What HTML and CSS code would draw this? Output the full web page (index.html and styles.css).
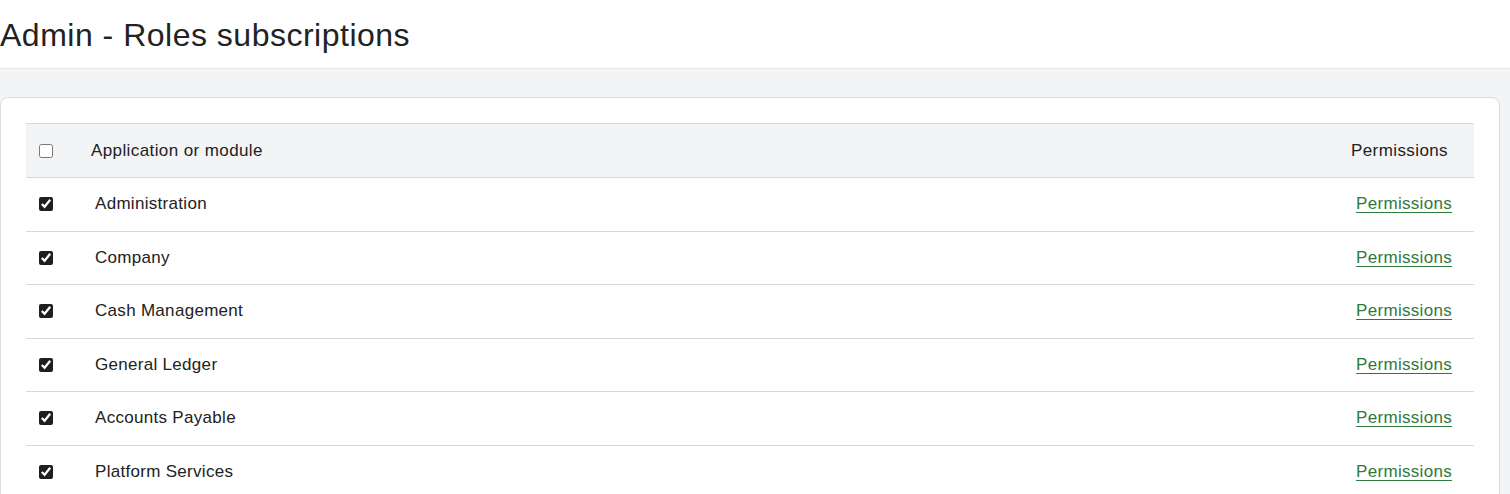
FILE: index.html
```html
<!DOCTYPE html>
<html lang="en">
<head>
<meta charset="utf-8">
<title>Admin - Roles subscriptions</title>
<link rel="stylesheet" href="styles.css">
</head>
<body>
<header class="page-header">
  <h1 class="page-title">Admin - Roles subscriptions</h1>
</header>
<main class="page-body">
  <section class="card">
    <table class="grid">
      <thead>
        <tr>
          <th class="col-check"><input type="checkbox" class="cb"></th>
          <th class="col-name">Application or module</th>
          <th class="col-perm">Permissions</th>
        </tr>
      </thead>
      <tbody>
        <tr>
          <td class="col-check"><input type="checkbox" class="cb" checked></td>
          <td class="col-name">Administration</td>
          <td class="col-perm"><a href="#" class="perm-link">Permissions</a></td>
        </tr>
        <tr>
          <td class="col-check"><input type="checkbox" class="cb" checked></td>
          <td class="col-name">Company</td>
          <td class="col-perm"><a href="#" class="perm-link">Permissions</a></td>
        </tr>
        <tr>
          <td class="col-check"><input type="checkbox" class="cb" checked></td>
          <td class="col-name">Cash Management</td>
          <td class="col-perm"><a href="#" class="perm-link">Permissions</a></td>
        </tr>
        <tr>
          <td class="col-check"><input type="checkbox" class="cb" checked></td>
          <td class="col-name">General Ledger</td>
          <td class="col-perm"><a href="#" class="perm-link">Permissions</a></td>
        </tr>
        <tr>
          <td class="col-check"><input type="checkbox" class="cb" checked></td>
          <td class="col-name">Accounts Payable</td>
          <td class="col-perm"><a href="#" class="perm-link">Permissions</a></td>
        </tr>
        <tr>
          <td class="col-check"><input type="checkbox" class="cb" checked></td>
          <td class="col-name">Platform Services</td>
          <td class="col-perm"><a href="#" class="perm-link">Permissions</a></td>
        </tr>
      </tbody>
    </table>
  </section>
</main>
</body>
</html>
```

FILE: styles.css
```css
html, body {
  margin: 0;
  padding: 0;
}
body {
  font-family: "Liberation Sans", Arial, sans-serif;
  color: #222;
  background: #f3f4f6;
}
.page-header {
  background: #fff;
  height: 68px;
  border-bottom: 1px solid #e4e5e7;
  display: flex;
  align-items: center;
}
.page-title {
  margin: 0;
  font-weight: 400;
  font-size: 32px;
  letter-spacing: 0.5px;
  line-height: 1;
  color: #222;
  padding-top: 1px;
}
.page-body {
  padding: 28px 10px 40px 0;
}
.card {
  background: #fff;
  border: 1px solid #dcdde0;
  border-radius: 8px;
  padding: 25px;
}
.grid {
  width: 100%;
  border-collapse: collapse;
  font-size: 17px;
  letter-spacing: 0.3px;
}
.grid th, .grid td {
  border-top: 1px solid #d7d8db;
  border-bottom: 1px solid #d7d8db;
  padding: 0;
  height: 52.5px;
  vertical-align: middle;
  font-weight: 400;
  text-align: left;
}
.grid thead th {
  background: #f3f4f6;
  height: 53px;
}
.grid thead th.col-name,
.grid thead th.col-perm {
  letter-spacing: 0.4px;
}
.col-check {
  width: 52px;
  padding-left: 13px !important;
}
.cb {
  margin: 0;
  width: 14px;
  height: 14px;
  display: block;
  accent-color: #1f1f1f;
}
.grid tbody .col-name {
  padding-left: 4px;
}
.grid th.col-perm {
  text-align: right;
  padding-right: 26px;
}
.grid td.col-perm {
  text-align: right;
  padding-right: 22px;
}
.perm-link {
  color: #2e7a3c;
  text-decoration: underline;
  text-decoration-color: #2e7a3c;
  text-underline-offset: 3px;
}
```
